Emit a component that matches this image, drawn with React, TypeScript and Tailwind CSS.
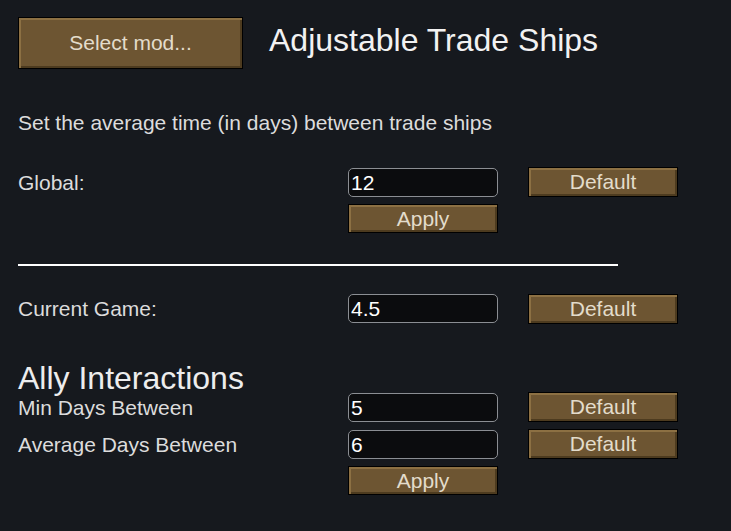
import React, { useState } from 'react';

const btn =
  'border border-black bg-[#6d5532] text-[#e3dccb] shadow-[inset_2px_2px_0_#8c7043,inset_-2px_-2px_0_#4d3b1f] flex items-center justify-center';

const Btn = ({ label, className = '' }: { label: string; className?: string }) => (
  <button className={`${btn} ${className}`}>{label}</button>
);

const Field = ({ value, onChange }: { value: string; onChange: (v: string) => void }) => (
  <input
    type="text"
    value={value}
    onChange={(e) => onChange(e.target.value)}
    className="w-[150px] h-[29px] bg-[#0b0c0e] border border-[#8b8e93] rounded-[5px] px-[2px] text-[21px] text-white focus:outline-none"
  />
);

const Label = ({ text }: { text: string }) => (
  <div className="h-[29px] flex items-center text-[21px] text-[#dcdcdc]">{text}</div>
);

const App = () => {
  const [globalDays, setGlobalDays] = useState('12');
  const [current, setCurrent] = useState('4.5');
  const [minDays, setMinDays] = useState('5');
  const [avgDays, setAvgDays] = useState('6');

  return (
    <div className="w-[731px] h-[531px] bg-[#16191e] text-[#e4e4e4] pl-[18px] pt-[17px] font-['Liberation_Sans',Arial,sans-serif] overflow-hidden">
      {/* Header */}
      <div className="flex items-center">
        <Btn label="Select mod..." className="w-[225px] h-[52px] text-[21px]" />
        <h1 className="ml-[26px] text-[32px] leading-[36px] text-[#f2f2f2] -mt-[6px]">Adjustable Trade Ships</h1>
      </div>

      <p className="mt-[42px] text-[21px] leading-[24px] text-[#dcdcdc]">
        Set the average time (in days) between trade ships
      </p>

      {/* Global */}
      <div className="mt-[33px] grid grid-cols-[300px_150px_150px] gap-x-[30px] gap-y-[7px]">
        <Label text="Global:" />
        <Field value={globalDays} onChange={setGlobalDays} />
        <Btn label="Default" className="w-[150px] h-[30px] -mt-[1px] text-[21px]" />
        <div />
        <Btn label="Apply" className="w-[150px] h-[29px] text-[21px]" />
      </div>

      <div className="mt-[31px] w-[600px] h-[2px] bg-white" />

      {/* Current game */}
      <div className="mt-[28px] grid grid-cols-[300px_150px_150px] gap-x-[30px]">
        <Label text="Current Game:" />
        <Field value={current} onChange={setCurrent} />
        <Btn label="Default" className="w-[150px] h-[30px] text-[21px]" />
      </div>

      <h2 className="mt-[38px] text-[32px] leading-[32px] text-[#ededed]">Ally Interactions</h2>

      <div className="-mt-[1px] grid grid-cols-[300px_150px_150px] gap-x-[30px] gap-y-[8px]">
        <Label text="Min Days Between" />
        <Field value={minDays} onChange={setMinDays} />
        <Btn label="Default" className="w-[150px] h-[30px] -mt-[1px] text-[21px]" />
        <Label text="Average Days Between" />
        <Field value={avgDays} onChange={setAvgDays} />
        <Btn label="Default" className="w-[150px] h-[30px] -mt-[1px] text-[21px]" />
        <div />
        <Btn label="Apply" className="w-[150px] h-[29px] -mt-[1px] text-[21px]" />
      </div>
    </div>
  );
};

export default App;
